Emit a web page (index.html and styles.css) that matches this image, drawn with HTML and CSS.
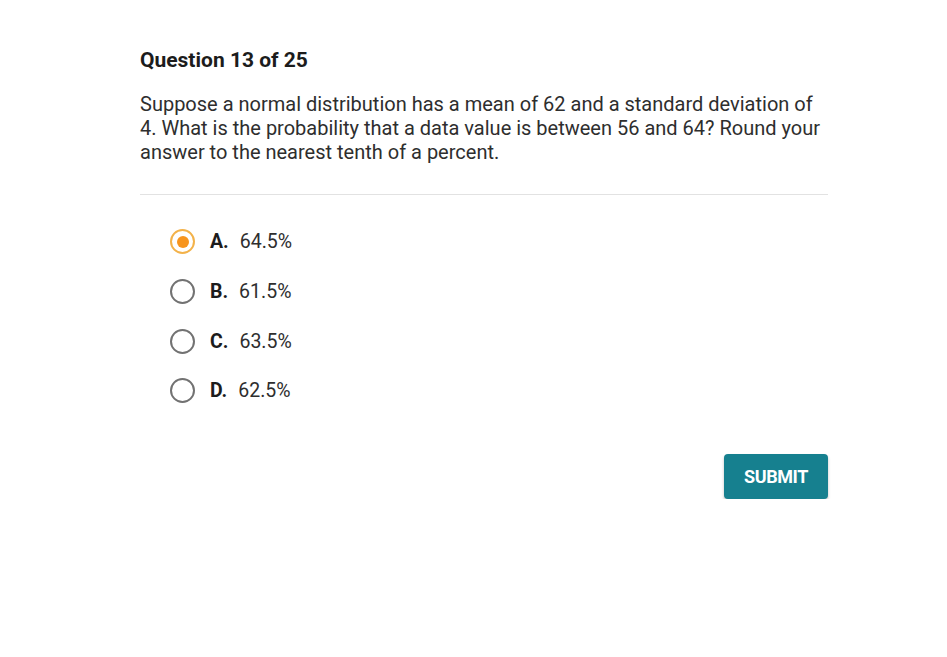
FILE: index.html
```html
<!DOCTYPE html>
<html>
<head>
<meta charset="utf-8">
<link rel="stylesheet" href="styles.css">
</head>
<body>
<main class="quiz">
  <h1 class="title">Question 13 of 25</h1>
  <p class="prompt">Suppose a normal distribution has a mean of 62 and a standard deviation of 4. What is the probability that a data value is between 56 and 64? Round your answer to the nearest tenth of a percent.</p>
  <hr class="divider">
  <ul class="options">
    <li class="option selected"><span class="radio"></span><span class="letter">A.</span><span class="value">64.5%</span></li>
    <li class="option"><span class="radio"></span><span class="letter">B.</span><span class="value">61.5%</span></li>
    <li class="option"><span class="radio"></span><span class="letter">C.</span><span class="value">63.5%</span></li>
    <li class="option"><span class="radio"></span><span class="letter">D.</span><span class="value">62.5%</span></li>
  </ul>
  <div class="actions"><button class="submit">SUBMIT</button></div>
</main>
</body>
</html>
```
FILE: styles.css
```css
html, body {
  margin: 0;
  padding: 0;
  background: #fff;
}
body {
  font-family: Roboto, "Liberation Sans", sans-serif;
  color: #222;
}
.quiz {
  width: 688px;
  margin-left: 140px;
  padding-top: 48px;
}
.title {
  margin: 0;
  font-size: 21px;
  line-height: 24px;
  font-weight: 700;
  color: #1c1c1c;
}
.prompt {
  margin: 20px 0 0;
  font-size: 20px;
  line-height: 24px;
  color: #2e2e2e;
}
.divider {
  margin: 30px 0 0;
  border: 0;
  border-top: 1px solid #e2e2e2;
  height: 0;
}
.options {
  list-style: none;
  margin: 22px 0 0;
  padding: 0 0 0 30px;
}
.option {
  display: flex;
  align-items: center;
  height: 49.7px;
  font-size: 19.5px;
}
.radio {
  box-sizing: border-box;
  width: 25px;
  height: 25px;
  border: 2px solid #727272;
  border-radius: 50%;
  margin-right: 15px;
  display: flex;
  align-items: center;
  justify-content: center;
}
.selected .radio {
  border-color: #f3b24a;
}
.selected .radio::after {
  content: "";
  width: 12px;
  height: 12px;
  border-radius: 50%;
  background: #f7951e;
}
.letter {
  font-weight: 700;
  color: #1c1c1c;
  margin-right: 11px;
}
.value {
  color: #2e2e2e;
}
.actions {
  display: flex;
  justify-content: flex-end;
  margin-top: 38px;
}
.submit {
  width: 104px;
  height: 45px;
  border: 0;
  border-radius: 4px;
  background: #16808f;
  color: #fff;
  font-family: Roboto, "Liberation Sans", sans-serif;
  font-weight: 700;
  font-size: 18px;
  letter-spacing: -0.4px;
  box-shadow: 0 2px 3px rgba(0,0,0,0.25);
  padding: 0;
}
```
